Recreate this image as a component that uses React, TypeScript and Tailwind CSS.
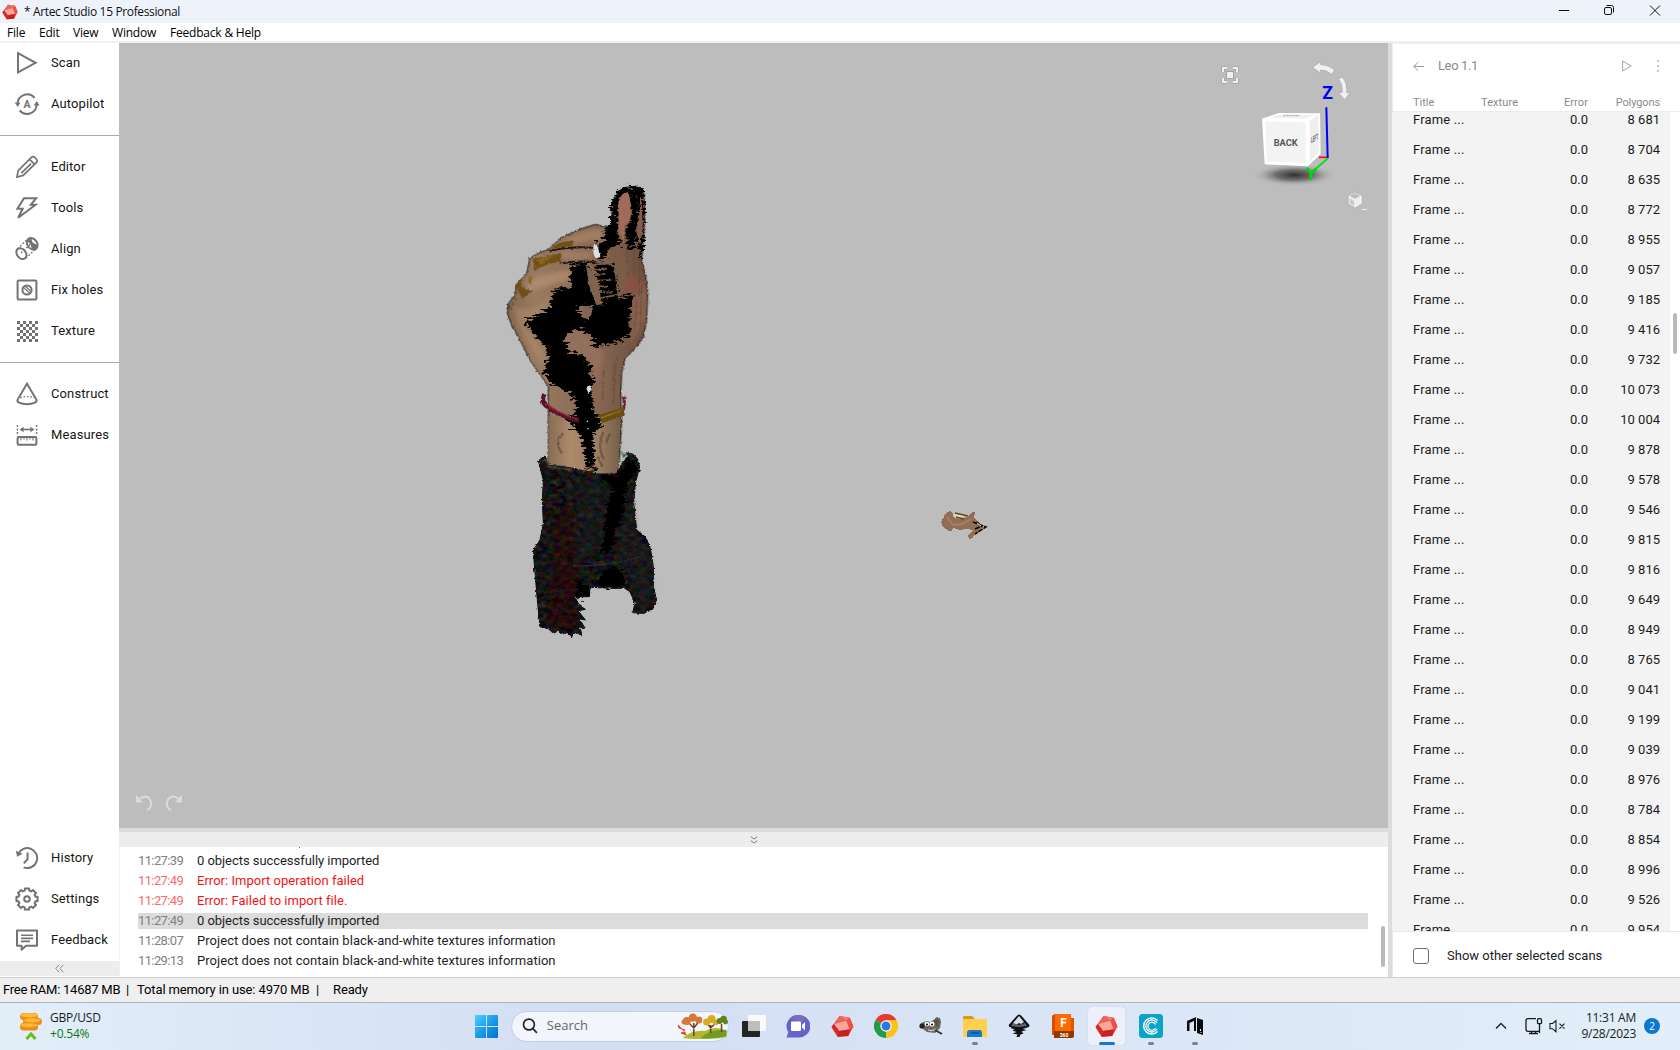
import React from "react";

type IconName =
  | "scan" | "autopilot" | "editor" | "tools" | "align" | "holes"
  | "texture" | "construct" | "measures" | "history" | "settings" | "feedback";

function gearPath() {
  const pts: string[] = [];
  const n = 8;
  for (let i = 0; i < n; i++) {
    const a = (i * 2 * Math.PI) / n - Math.PI / 2;
    [[-0.2, 10.8], [0.2, 10.8], [0.27, 8.7], [0.52, 8.7]].forEach(([d, r]) => {
      pts.push(`${(12 + r * Math.cos(a + d)).toFixed(2)},${(12 + r * Math.sin(a + d)).toFixed(2)}`);
    });
  }
  return `M${pts.join("L")}Z`;
}

function ToolIcon({ name }: { name: IconName }) {
  const shapes: Record<IconName, React.ReactNode> = {
    scan: <path d="M3 2.2v19.2L20.6 11.8z" />,
    autopilot: (
      <g>
        <path d="M2.6 11.5a9.6 9.6 0 0 1 17-5.6M21.6 13a9.6 9.6 0 0 1-17 5.4" />
        <path d="M-.3 10.6h5.8L2.7 15zM18.7 13.4h5.8L21.8 9z" fill="#737373" stroke="none" />
        <text x="12" y="15.8" fontSize="10.5" fontWeight="700" textAnchor="middle" fill="#737373" stroke="none" fontFamily="Roboto, sans-serif">A</text>
      </g>
    ),
    editor: <path d="M2 22l1.2-6.4L16.6 2.2q1.8-1.2 3.4.5l1.3 1.3q1.6 1.7.2 3.4L8.2 20.4zM14.6 4.4l5 5M16 8.6L6.4 18.2" strokeWidth="1.7" />,
    tools: <path d="M9 2.2h12.2l-5.4 6.6h4.8L3.2 21.8l4.400-9H2.400z" />,
    align: (
      <g>
        <ellipse cx="6.4" cy="16.6" rx="4.4" ry="6" transform="rotate(-38 6.4 16.6)" />
        <ellipse cx="17.2" cy="6.8" rx="4.8" ry="6.2" transform="rotate(-38 17.2 6.8)" />
        <path d="M12.4 4.2q1-3 4-3l1 4 5 3q.6 3-1.600 5.200l-4-2-1.500-4.500z" fill="#737373" stroke="none" />
        <path d="M2.5 12L13 1.500M10.800 21.400L21.500 11M6 16L16.500 6" strokeWidth="1.3" strokeDasharray="2 1.6" />
      </g>
    ),
    holes: (
      <g>
        <rect x="2.6" y="2.6" width="18.8" height="18.8" rx="1" />
        <circle cx="12" cy="12" r="4.6" />
        <path d="M8.600 9.600l6.200 5.400M10 8l5.600 5" strokeWidth="1.2" />
      </g>
    ),
    texture: (
      <g fill="#737373" stroke="none" shapeRendering="crispEdges">
        {Array.from({ length: 49 }, (_, i) => i)
          .filter((i) => i % 2 === 0)
          .map((i) => (
            <rect key={i} x={1.5 + (i % 7) * 3} y={1.5 + Math.floor(i / 7) * 3} width="3" height="3" />
          ))}
      </g>
    ),
    construct: (
      <g>
        <path d="M12 1.800L2.600 17.600c-1.200 2.800 3.600 4.600 9.400 4.600s10.600-1.800 9.400-4.600z" />
        <path d="M5.200 15.600q6.800-2 13.800 0" strokeWidth="1.4" strokeDasharray="1.6 1.8" />
      </g>
    ),
    measures: (
      <g>
        <rect x="2.6" y="14" width="18.8" height="7.8" rx="1" />
        <path d="M6 14v3.400M9 14v2.400M12 14v3.400M15 14v2.400M18 14v3.400" strokeWidth="1.1" />
        <path d="M2.400 2v9M21.600 2v9" strokeWidth="1.4" strokeDasharray="2 1.5" />
        <path d="M6 6.500h12" strokeWidth="1.6" />
        <path d="M4.600 6.500l4-2.700v5.400zM19.400 6.500l-4-2.700v5.400z" fill="#737373" stroke="none" />
      </g>
    ),
    history: (
      <g>
        <path d="M3 8.200A10 10 0 1 1 8.600 21.400" />
        <path d="M.8 4.800l1.400 6 5.400-3z" fill="#737373" stroke="none" />
        <path d="M12.600 6.400v6.800l-3.800 4" />
      </g>
    ),
    settings: (
      <g>
        <path d={gearPath()} strokeLinejoin="round" />
        <circle cx="12" cy="12" r="2.8" />
      </g>
    ),
    feedback: (
      <g>
        <path d="M2 2.600h20v15.200H11l-4.400 4V17.800H2z" strokeLinejoin="round" />
        <path d="M6 7.200h12M6 10.400h12M6 13.400h9" strokeWidth="1.6" />
      </g>
    ),
  };
  return (
    <svg className="h-6 w-6 shrink-0 overflow-visible" viewBox="0 0 24 24" fill="none" stroke="#737373" strokeWidth="2">
      {shapes[name]}
    </svg>
  );
}

function ToolItem({ icon, label }: { icon: IconName; label: string }) {
  return (
    <div className="flex h-[41px] items-center pl-[15px]">
      <ToolIcon name={icon} />
      <span className="ml-3 text-[13px] tracking-[0.12px] text-[#161616]">{label}</span>
    </div>
  );
}

function RedGem({ className }: { className: string }) {
  return (
    <svg className={className} viewBox="0 0 24 24">
      <path d="M9 1L19.500 2.800 23.400 12 18 22 7 22.800.6 12.500z" fill="#e2382f" />
      <path d="M9 1L19.500 2.800 16 6z" fill="#f7796c" />
      <path d="M9 1L3 9.500 16 6z" fill="#ee6357" />
      <path d="M16 6l3.500-3.200L23.400 12l-3.900 3z" fill="#ef5046" />
      <path d="M3 9.500L16 6l3.500 9L8.500 16.800z" fill="#f9a79c" />
      <path d="M3 9.500L.6 12.500 7 22.800l1.500-6z" fill="#d62a24" />
      <path d="M8.500 16.800l11-1.800L18 22 7 22.800z" fill="#c9211d" />
    </svg>
  );
}

function TitleBar() {
  return (
    <div className="flex h-[23px] shrink-0 items-center justify-between bg-[#eef3fb]">
      <div className="flex items-center">
        <RedGem className="ml-[2px] h-4 w-4" />
        <span className="ml-[6px] font-['Open_Sans',sans-serif] text-[12px] tracking-[-0.36px] text-[#111]">* Artec Studio 15 Professional</span>
      </div>
      <svg className="mr-[18px] mb-[3px] h-[14px] w-[106px]" viewBox="0 0 106 14" fill="none" stroke="#111" strokeWidth="1">
        <path d="M3 7.500h10" />
        <rect x="48.500" y="4.500" width="7" height="7" rx="1.500" />
        <path d="M50.500 2.500h5q2 0 2 2v5" />
        <path d="M94 2.500l10 10M104 2.500l-10 10" />
      </svg>
    </div>
  );
}

function MenuBar() {
  const items: [string, string][] = [
    ["File", "w-8"], ["Edit", "w-[34px]"], ["View", "w-[39px]"], ["Window", "w-[58px]"], ["Feedback & Help", ""],
  ];
  return (
    <div className="flex h-5 shrink-0 items-center border-b-2 border-[#f0f0f0] bg-white pl-[7px] pt-[2px] font-['Open_Sans',sans-serif] text-[12px] tracking-[-0.2px] text-black">
      {items.map(([t, w]) => (
        <span key={t} className={`${w} whitespace-nowrap`}>{t}</span>
      ))}
    </div>
  );
}

function Sidebar() {
  return (
    <aside className="flex w-[119px] shrink-0 flex-col bg-white">
      <div className="-mt-[1px]">
        <ToolItem icon="scan" label="Scan" />
        <ToolItem icon="autopilot" label="Autopilot" />
      </div>
      <div className="mt-[11px] border-t border-[#a9a9a9] pt-[10px]">
        <ToolItem icon="editor" label="Editor" />
        <ToolItem icon="tools" label="Tools" />
        <ToolItem icon="align" label="Align" />
        <ToolItem icon="holes" label="Fix holes" />
        <ToolItem icon="texture" label="Texture" />
      </div>
      <div className="mt-[11px] border-t border-[#a9a9a9] pt-[10px]">
        <ToolItem icon="construct" label="Construct" />
        <ToolItem icon="measures" label="Measures" />
      </div>
      <div className="mt-auto">
        <ToolItem icon="history" label="History" />
        <ToolItem icon="settings" label="Settings" />
        <ToolItem icon="feedback" label="Feedback" />
      </div>
      <div className="mt-px mb-px flex h-[15px] items-center justify-center bg-[#ededed]">
        <svg className="h-[9px] w-[9px]" viewBox="0 0 9 9" fill="none" stroke="#8a8a8a"><path d="M4 .8L.8 4.500 4 8.200M8.200.8L5 4.500l3.200 3.700" /></svg>
      </div>
    </aside>
  );
}

const HAND =
  "M405 80L415 62 440 52H478L492 70 495 130 492 190 485 270 497 320 503 370 500 450 490 500 470 530 435 565 425 610 422 670 425 750 418 870 410 915 350 912 280 895 205 880V650L150 570 115 500 95 465 82 430 85 400 105 375 108 345 140 310 150 265 165 255 210 235 240 205 290 182 345 163 375 170 400 165 393 110Z";

const SLEEVE =
  "M175 872L195 858 205 885 280 895 350 912H410L430 872 446 858 436 848 458 852 472 866 479 890 466 940 461 1000 470 1080 495 1100 510 1130 520 1190V1250L530 1290 520 1315 490 1330 458 1328 465 1300 450 1265 430 1252 400 1255 330 1252 328 1280H284L298 1306 316 1318 294 1322 316 1350 298 1346 316 1376 294 1370 306 1398 288 1386 276 1400 262 1388 248 1392 236 1382 220 1390 205 1376 180 1370 172 1290 165 1210 160 1140 180 1110 190 1060 187 990 190 930Z";

function ScannedHand() {
  return (
    <svg className="absolute left-[361px] top-[127px] h-[480px] w-[200px]" viewBox="0 0 600 1440">
      <defs>
        <filter id="ragged" x="-5%" y="-5%" width="110%" height="110%" colorInterpolationFilters="sRGB">
          <feTurbulence type="fractalNoise" baseFrequency="0.05 0.13" numOctaves="2" seed="4" result="n" />
          <feDisplacementMap in="SourceGraphic" in2="n" scale="38" xChannelSelector="R" yChannelSelector="G" />
        </filter>
        <filter id="edge" x="-5%" y="-5%" width="110%" height="110%" colorInterpolationFilters="sRGB">
          <feTurbulence type="fractalNoise" baseFrequency="0.14" numOctaves="1" seed="9" result="n" />
          <feDisplacementMap in="SourceGraphic" in2="n" scale="10" xChannelSelector="R" yChannelSelector="G" />
        </filter>
        <filter id="cloth" x="0" y="0" width="100%" height="100%" colorInterpolationFilters="sRGB">
          <feTurbulence type="fractalNoise" baseFrequency="0.05 0.07" numOctaves="4" seed="12" />
          <feColorMatrix values="0.46 0 0 0 -0.15  0 0.36 0 0 -0.1  0 0 0.4 0 -0.12  0 0 0 0 1" />
          <feComposite in2="SourceGraphic" operator="in" />
        </filter>
        <filter id="soft" x="-20%" y="-20%" width="140%" height="140%"><feGaussianBlur stdDeviation="6" /></filter>
        <linearGradient id="skin" x1="0" x2="1">
          <stop offset="0" stopColor="#856750" />
          <stop offset=".2" stopColor="#9a7b60" />
          <stop offset=".65" stopColor="#866752" />
          <stop offset="1" stopColor="#6c4d3d" />
        </linearGradient>
        <linearGradient id="wrist" x1="0" x2="1">
          <stop offset="0" stopColor="#8a6c54" />
          <stop offset=".3" stopColor="#ac8a6c" />
          <stop offset=".7" stopColor="#9c7e61" />
          <stop offset="1" stopColor="#76604b" />
        </linearGradient>
        <clipPath id="handClip"><path d={HAND} /></clipPath>
      </defs>

      <g filter="url(#edge)">
        <path d={HAND} fill="url(#skin)" stroke="#1a120c" strokeWidth="3" />
        <path d="M206 740L290 750H350L420 740 418 870 410 915 350 912 280 895 206 880Z" fill="url(#wrist)" />
        <g clipPath="url(#handClip)">
          <g filter="url(#soft)">
            <path d="M100 410Q150 430 190 400L210 370 200 420 130 460 190 540 200 600Q120 500 100 410Z" fill="#b18d6d" opacity=".55" />
            <path d="M140 330Q200 310 270 300V330Q210 340 140 370Z" fill="#b59072" opacity=".7" />
            <path d="M240 220Q300 180 370 175V210Q290 215 240 230Z" fill="#b08d6c" opacity=".6" />
            <path d="M240 245H335V268H250Z" fill="#ad8969" opacity=".6" />
            <path d="M430 320Q470 310 500 340L496 380 436 390Z" fill="#8b5146" opacity=".8" />
            <path d="M450 400L500 340V450L450 530Z" fill="#876050" />
            <path d="M246 512L300 476 345 520 372 550 350 640 330 580Z" fill="#946f5c" />
          </g>
          <path d="M212 238Q240 208 285 214L274 228 216 236ZM158 266L198 258 243 250V276Q193 280 164 304ZM106 345L122 332 128 354 158 362 126 388Z" fill="#705018" />
          <path d="M148 318L156 322 152 346 144 338ZM165 270L225 254 185 284Z" fill="#89661f" />
          <path d="M112 350Q104 400 84 430" stroke="#70511c" strokeWidth="5" fill="none" strokeDasharray="9 7" />
          <path d="M205 241Q280 223 340 232L338 236Q278 232 212 245ZM240 278Q290 268 350 274V278Q290 276 240 283ZM220 356Q250 350 272 358L250 361Z" fill="#1e1610" />
          <g stroke="#664c3a" strokeWidth="4" opacity=".7" fill="none">
            <path d="M420 230L426 300M440 240L444 320M462 230V320M478 260V380M402 580L398 660M410 560L400 700M370 600L368 690M470 390L464 490M485 350L481 470" strokeDasharray="26 5" />
            <path d="M235 800Q230 830 245 850M250 790L236 805M370 785Q350 830 372 870M352 860L368 890M390 790L378 820" strokeWidth="7" />
          </g>
        </g>
      </g>

      {/* Gaps in the captured surface */}
      <g filter="url(#ragged)" fill="#000" stroke="#000" strokeWidth="7">
        <path d="M400 96L415 66 440 54 484 56 488 92 490 170 484 244 480 266 476 210 486 150 480 90 470 70 450 72 422 76 410 112V200L418 222 385 234 374 262 358 264 350 226 378 214 374 178 400 170Z" />
        <path d="M454 76L472 88 474 122 468 160 470 200 460 232H446L440 178 458 160Z" />
        <path d="M274 284H320L326 340 352 400 304 408 282 402 300 432 324 456 340 412 400 396 454 378 446 430 442 490 420 510 346 530 340 496 300 472 278 478 242 508 274 548 306 560 330 592 338 640 324 652 334 690 342 750 294 750 290 690 258 660 210 636 198 600 206 560 196 520 162 490 138 456 180 434 216 412 222 366 274 354Z" />
        <path d="M276 402L300 438 346 466 350 500 300 474 262 480Z" />
        <path d="M344 284H398L414 322 412 388 366 396 358 340Z" />
        <path d="M296 730L346 734 362 752 350 780 336 786 340 850 342 893 324 898 318 850 308 800 286 774 264 744Z" />
      </g>
      <path d="M300 414L338 412 334 434 322 448Q310 434 300 414Z" fill="#836553" filter="url(#edge)" />
      <path d="M318 288L332 296 352 330 366 402 350 406 330 356Z" fill="#816450" filter="url(#edge)" />
      <g filter="url(#edge)" stroke="#7c5f49" strokeWidth="5" fill="none">
        <path d="M332 284L392 280M340 300L380 296M344 316L376 312M350 332L394 330M352 348L384 350M358 366L398 368M362 384L404 376M404 290L416 380" />
        <path d="M378 524L436 516M382 532L434 526M386 542L430 538" strokeWidth="3" strokeDasharray="8 3" />
      </g>
      <path d="M386 236L420 228 444 288 432 370 416 350 408 290Z" fill="#7b5d47" filter="url(#edge)" />
      <path d="M416 96Q424 64 446 68L454 112 450 152 436 164 430 220 416 180Z" fill="#a06c58" filter="url(#edge)" />
      <path d="M480 78L486 100 488 180 480 226 468 180 480 130Z" fill="#845c4d" filter="url(#edge)" />
      <path d="M341 226L355 224V240L362 262 346 264 340 250ZM318 652L330 646 334 660 326 672Z" fill="#dedede" filter="url(#edge)" />

      {/* Wristbands */}
      <g filter="url(#edge)" fill="none">
        <path d="M193 672Q184 694 196 706 236 738 296 752" stroke="#591428" strokeWidth="13" />
        <path d="M196 698Q234 732 290 746" stroke="#8f2c45" strokeWidth="4" />
        <path d="M430 678Q436 700 430 720" stroke="#6d2034" strokeWidth="9" />
        <path d="M354 736L430 712 434 736 366 760Z" fill="#6a4e10" />
        <path d="M362 744L424 722" stroke="#937325" strokeWidth="5" />
      </g>

      {/* Dark sleeve */}
      <g filter="url(#edge)">
        <path d={SLEEVE} fill="#0c0c0d" stroke="#0c0c0d" strokeWidth="3" />
        <path d={SLEEVE} fill="#000" filter="url(#cloth)" />
        <g filter="url(#soft)" opacity=".35">
          <path d="M230 1010L280 1000 290 1110 300 1180 280 1300 300 1380 200 1370 220 1200Z" fill="#3a0505" />
          <path d="M290 920L400 950 380 1020 370 1140 290 1180Z" fill="#1f2124" />
          <path d="M455 940L470 1090 510 1140 520 1300 480 1310 440 1200 400 1130Z" fill="#242326" />
        </g>
      </g>
      <g filter="url(#ragged)" fill="#000">
        <path d="M356 915H412L440 866 470 880 476 900 440 940 436 1010 412 1080 392 1150 366 1150 372 1080 384 1010 396 950Z" />
        <path d="M364 1210L410 1186 436 1230 430 1250 350 1250ZM290 1230L328 1250 326 1280H286Z" />
      </g>
      <g filter="url(#edge)" fill="none">
        <path d="M280 1186Q370 1194 480 1160" stroke="#2c2c31" strokeWidth="4" />
        <path d="M186 872L198 870 206 890 276 900" stroke="#57503c" strokeWidth="5" opacity=".8" />
        <path d="M422 850L440 854 434 862Z" fill="#27614e" />
        <path d="M310 905L346 880M324 908L350 892" stroke="#4f3c20" strokeWidth="4" />
      </g>
      <path d="M322 752v4M324 774v4" stroke="#ddd" strokeWidth="4" />
    </svg>
  );
}

function ScanFragment() {
  return (
    <svg className="absolute left-[820px] top-[462px] h-[34px] w-[52px]" viewBox="0 0 52 34">
      <path d="M2 17L5 12 6 9 11 6 14 8V12L22 14 30 11 33 7H36L35 13 39 16 42 20 44 23 38 28 34 31V33L30 34 29 30 34 25 28 24 20 25 14 23 13 26H10L4 22Z" fill="#936e56" shapeRendering="crispEdges" />
      <path d="M8 12l6 8 9-1 9-5" stroke="#a77f61" strokeWidth="2" fill="none" />
      <path d="M15 9l9 1v4l-8-1z" fill="#dedbd4" />
      <path d="M16 8l13 3M17 12l8 2" stroke="#69460d" strokeWidth="1.500" />
      <path d="M34 17l13 5-11 7M38 17l5 5M36 24l7-3" stroke="#090704" strokeWidth="1.600" fill="none" strokeDasharray="5 1" />
      <path d="M38 18l4 3" stroke="#eee" strokeWidth="1" />
    </svg>
  );
}

function NavigationCube() {
  return (
    <svg className="absolute left-[1121px] top-[7px] h-[160px] w-[140px]" viewBox="120 30 420 480">
      <defs>
        <radialGradient id="cubeShadow">
          <stop offset="0" stopColor="#303030" />
          <stop offset=".45" stopColor="#626262" stopOpacity=".85" />
          <stop offset="1" stopColor="#bdbdbd" stopOpacity="0" />
        </radialGradient>
      </defs>
      <ellipse cx="283" cy="405" rx="128" ry="34" fill="url(#cubeShadow)" />
      <path d="M186 236l50-17 124 1 2 122-38 37-130-6z" fill="#fff" />
      <path d="M196 244l120 2 2 122-118-3z" fill="#f3f3f3" />
      <path d="M329 243l26-18 2 112-28 28z" fill="#efefef" />
      <path d="M208 233l36-10 98 1-22 12z" fill="#f0f0f0" />
      <text x="221" y="317" fontSize="27" fontWeight="700" fill="#555" fontFamily="Roboto, sans-serif" textLength="72" lengthAdjust="spacingAndGlyphs">BACK</text>
      <text transform="translate(333 309) skewY(-27) scale(.38 1)" fontSize="25" fontWeight="700" fill="#666" fontFamily="Roboto, sans-serif">LEFT</text>
      <path d="M250 227h48" stroke="#a5a5a5" strokeWidth="3" strokeDasharray="7 2" />
      <path d="M357 352h28" stroke="#f01010" strokeWidth="5" />
      <path d="M379 202l4 152" stroke="#0000fa" strokeWidth="6" />
      <path d="M384 355l-42 36" stroke="#00e516" strokeWidth="6" />
      <path d="M320 384l13 16 16-14M333 400v20" stroke="#00d60e" strokeWidth="8" fill="none" />
      <text x="383" y="176" fontSize="53" fontWeight="700" fill="#0000f5" textAnchor="middle" fontFamily="Roboto, sans-serif">Z</text>
      <g fill="#f1f1f1" stroke="#a7a7a7" strokeWidth="2">
        <path d="M338 82l24-17v9q24 0 42 16l-9 13q-16-14-34-13v9z" />
        <path d="M427 111q16 20 13 47l10-1-16 22-18-21 11-1q2-22-11-40z" />
      </g>
      <path d="M444 467l21-11 22 11v24l-21 13-22-12z" fill="#eeeeee" stroke="#a5a5a5" strokeWidth="2" />
      <path d="M449 468l16-8 15 8-15 8z" fill="#bbbbbb" />
      <path d="M449 475l13 7v15l-13-7z" fill="#c9c9c9" />
      <path d="M484 507h19l-9 9z" fill="#eeeeee" />
    </svg>
  );
}

function Viewport() {
  return (
    <div className="relative h-[785px] shrink-0 overflow-hidden bg-[#bdbdbd]">
      <ScannedHand />
      <ScanFragment />
      <NavigationCube />
      <svg className="absolute left-[1102px] top-[23px] h-[18px] w-[18px]" viewBox="0 0 18 18" fill="none" stroke="#a3a3a3">
        <path d="M2 6V2h4M12 2h4v4M16 12v4h-4M6 16H2v-4" strokeWidth="3.500" />
        <path d="M2 6V2h4M12 2h4v4M16 12v4h-4M6 16H2v-4" stroke="#f0f0f0" strokeWidth="2" />
        <rect x="5.500" y="5.500" width="7" height="7" fill="#f0f0f0" />
      </svg>
      <svg className="absolute left-[16px] top-[750px] h-[20px] w-[48px]" viewBox="0 0 48 20" fill="none" stroke="#dadada" strokeWidth="2">
        <path d="M4 6q7-5 11 .5 3.500 7-3 10.500M44 6q-7-5-11 .5-3.500 7 3 10.500" />
        <path d="M1 1.500v8h7zM47 1.500v8h-7z" fill="#dadada" stroke="none" />
      </svg>
    </div>
  );
}

const LOG = [
  { time: "11:27:39", text: "0 objects successfully imported" },
  { time: "11:27:49", text: "Error: Import operation failed", error: true },
  { time: "11:27:49", text: "Error: Failed to import file.", error: true },
  { time: "11:27:49", text: "0 objects successfully imported", selected: true },
  { time: "11:28:07", text: "Project does not contain black-and-white textures information" },
  { time: "11:29:13", text: "Project does not contain black-and-white textures information" },
];

function LogPanel() {
  return (
    <div className="flex min-h-0 flex-1 flex-col border-t-4 border-[#dcdcdc]">
      <div className="flex h-[15px] shrink-0 items-center justify-center bg-[#ededed]">
        <svg className="h-[8px] w-[8px]" viewBox="0 0 8 8" fill="none" stroke="#7b7b7b"><path d="M.7.700L4 3 7.300.700M.7 4.700L4 7l3.300-2.300" /></svg>
      </div>
      <div className="flex flex-1 border-l border-[#f0f0f0] bg-white pl-[18px]">
        <div className="w-[1230px]">
          <div className="ml-[161px] h-1 w-px"><div className="h-px bg-red-500" /></div>
          {LOG.map((row, i) => (
            <div key={i} className="flex h-5 items-center">
              <div className={`flex h-4 w-full items-center text-[13px] ${row.selected ? "bg-[#dcdcdc]" : ""} ${row.error ? "text-[#f51414]" : "text-[#1e1e1e]"}`}>
                <span className={`w-[59px] tracking-[-0.62px] ${row.error ? "text-[#fa6b6b]" : "text-[#808080]"}`}>{row.time}</span>
                <span className={row.text.startsWith("Project") ? "tracking-[0.05px]" : row.error ? "tracking-[0.03px]" : "tracking-[-0.05px]"}>{row.text}</span>
              </div>
            </div>
          ))}
        </div>
        <div className="mt-[79px] ml-[13px] h-[41px] w-1 rounded-full bg-[#b9b9b9]" />
      </div>
    </div>
  );
}

const POLYGONS = [
  "8 681", "8 704", "8 635", "8 772", "8 955", "9 057", "9 185", "9 416", "9 732", "10 073",
  "10 004", "9 878", "9 578", "9 546", "9 815", "9 816", "9 649", "8 949", "8 765", "9 041",
  "9 199", "9 039", "8 976", "8 784", "8 854", "8 996", "9 526", "9 954",
];

function ScanPanel() {
  return (
    <aside className="flex w-[292px] shrink-0 flex-col border-l-4 border-[#dcdcdc] bg-white">
      <div className="flex h-[69px] shrink-0 flex-col border-b border-l border-t border-[#ececec] pl-5 text-[#8b8b8b]">
        <div className="mt-[10px] flex h-6 items-center">
          <svg className="h-[11px] w-[11px]" viewBox="0 0 11 11" fill="none" stroke="#999"><path d="M11 5.500H.8M5 1.300L.8 5.500 5 9.700" /></svg>
          <span className="ml-[14px] w-[184px] text-[13px] tracking-[-0.38px]">Leo 1.1</span>
          <svg className="h-3 w-[10px]" viewBox="0 0 10 12" fill="none" stroke="#a3a3a3"><path d="M.6 1v10l8.600-5z" /></svg>
          <svg className="ml-[25px] h-3 w-[3px]" viewBox="0 0 3 12" fill="#c7c7c7"><path d="M0 0h2v2H0zM0 5h2v2H0zM0 10h2v2H0z" /></svg>
        </div>
        <div className="mt-[17px] grid grid-cols-[68px_107px_72px] text-[11px] leading-4">
          <span>Title</span>
          <span className="flex justify-between"><span className="tracking-[0.1px]">Texture</span><span className="tracking-[0.1px]">Error</span></span>
          <span className="text-right tracking-[-0.1px]">Polygons</span>
        </div>
      </div>
      <div className="flex h-[819px] shrink-0 overflow-hidden">
        <div className="w-[278px] bg-[#f3f3f3]">
          <div className="-mt-[7px] pl-[21px]">
            {POLYGONS.map((p, i) => (
              <div key={i} className="grid h-[30px] grid-cols-[68px_107px_72px] items-center text-[13px] text-[#1b1b1b]">
                <span className="tracking-[0.16px]">Frame ...</span>
                <span className="text-right">0.0</span>
                <span className="text-right">{p}</span>
              </div>
            ))}
          </div>
        </div>
        <div className="mt-[201px] ml-[3px] h-[41px] w-1 rounded-full bg-[#b9b9b9]" />
      </div>
      <div className="flex flex-1 items-center border-l border-t border-[#e8e8e8] pl-5 pt-[2px] text-[13px] text-[#1b1b1b]">
        <div className="h-4 w-4 rounded-[3px] border border-[#6f6f6f]" />
        <span className="ml-[18px]">Show other selected scans</span>
      </div>
    </aside>
  );
}

function StatusBar() {
  return (
    <div className="flex h-[26px] shrink-0 items-center border-b border-t border-b-[#aab3bf] border-t-[#cfcfcf] bg-[#efefef] pl-[3px] text-[13px] tracking-[-0.12px] text-black">
      <span className="w-[123px] whitespace-nowrap tracking-[-0.25px]">Free RAM: 14687 MB</span>
      <span className="w-[11px]">|</span>
      <span className="w-[179px] whitespace-nowrap">Total memory in use: 4970 MB</span>
      <span className="w-[17px]">|</span>
      <span>Ready</span>
    </div>
  );
}

function Leaves() {
  return (
    <svg className="h-[26px] w-[52px]" viewBox="0 0 52 26">
      <path d="M6 25q9-8 22-7 12-6 22 0v6q-20 4-44 1z" fill="#b3b82a" />
      <path d="M24 25q10-9 26-8v6q-10 3-26 2z" fill="#6f9d22" />
      <path d="M17 10v13M13 11l4 4 4-5M34 12v8M31 11l3 4 4-4M45 11v8" stroke="#6b3f22" strokeWidth="1.500" fill="none" />
      <g fill="#d77834"><circle cx="10" cy="8" r="4" /><circle cx="16" cy="4.500" r="4.200" /><circle cx="22" cy="7" r="3.600" /><circle cx="7" cy="9" r="2.500" /></g>
      <g fill="#d7ac22"><circle cx="30" cy="9" r="3.600" /><circle cx="35" cy="6" r="4" /><circle cx="39" cy="9.500" r="2.800" /></g>
      <g fill="#66801e"><circle cx="43" cy="8" r="3" /><circle cx="47" cy="6" r="3.400" /><circle cx="49" cy="9" r="2.500" /></g>
      <path d="M1 12l4 4-3-1zM4 20l4-1 1 3zM5 16l3 1-1 1z" fill="#e64c25" stroke="#e64c25" />
    </svg>
  );
}

function Taskbar() {
  return (
    <div className="flex flex-1 items-center bg-gradient-to-r from-[#e2eef8] via-[#d3def3] via-35% to-[#e2eef9] pb-px font-['Open_Sans',sans-serif] text-[#1b1b1b]">
      <svg className="ml-[18px] mb-px h-[28px] w-[25px]" viewBox="0 0 25 28">
        <g fill="#f18a16"><rect x="2" y="1" width="18" height="7" rx="3.500" /><rect x="5" y="6" width="19" height="7" rx="3.500" /><rect x="2" y="11" width="18" height="7.500" rx="3.500" /></g>
        <g fill="#ffbb38"><ellipse cx="11" cy="3.200" rx="8.500" ry="2.300" /><ellipse cx="14.500" cy="8.300" rx="8.500" ry="2" /><ellipse cx="11" cy="13.200" rx="8.500" ry="2" /></g>
        <path d="M8.500 27l4.500-5 4.500 5" fill="none" stroke="#62c21a" strokeWidth="3" />
      </svg>
      <div className="ml-[7px] w-[425px] text-[12px] leading-4 tracking-[-0.2px]">
        <div>GBP/USD</div>
        <div className="text-[#087a12]">+0.54%</div>
      </div>
      <svg className="h-[23px] w-[23px]" viewBox="0 0 23 23">
        <defs><linearGradient id="win" x1="0" y1="0" x2="1" y2="1"><stop offset="0" stopColor="#4fd0ff" /><stop offset=".5" stopColor="#1a9de8" /><stop offset="1" stopColor="#0070d0" /></linearGradient></defs>
        <path d="M0 1q0-1 1-1h10v11H0zM12 0h10q1 0 1 1v10H12zM0 12h11v11H1q-1 0-1-1zM12 12h11v10q0 1-1 1H12z" fill="url(#win)" />
      </svg>
      <div className="ml-[13px] flex h-[31px] w-[218px] items-center rounded-full border border-[#c5cde2] bg-[#f2f5fc] pl-[10px]">
        <svg className="h-4 w-4" viewBox="0 0 16 16" fill="none" stroke="#222" strokeWidth="1.700"><circle cx="7" cy="6.500" r="5.500" /><path d="M11 10.500l4 4.500" /></svg>
        <span className="ml-[9px] w-[131px] text-[13px] text-[#666]">Search</span>
        <Leaves />
      </div>
      <svg className="ml-[13px] h-[23px] w-[25px]" viewBox="0 0 25 23">
        <rect x="0" y="6" width="18" height="16" rx="1" fill="#242424" />
        <rect x="6" y="0" width="18" height="16" rx="1" fill="#fafafa" />
        <rect x="6" y="6" width="12" height="10" fill="#bdbdbd" />
      </svg>
      <svg className="ml-[19px] h-[23px] w-[24px]" viewBox="0 0 24 23">
        <path d="M12 0a11.300 11.300 0 1 1 0 22.500H.5l1.800-5.200A11.300 11.300 0 0 1 12 0z" fill="#6264c9" />
        <path d="M4 3.500A11.300 11.300 0 0 1 20 3l-4 5z" fill="#7d6bb9" />
        <rect x="5" y="6.500" width="10" height="9.500" rx="1" fill="#fff" /><path d="M16 10l3-3v8.500l-3-3z" fill="#fff" />
      </svg>
      <RedGem className="ml-[21px] h-[23px] w-[23px]" />
      <svg className="ml-[20px] h-6 w-6" viewBox="0 0 24 24">
        <path d="M12 12L1.600 6A12 12 0 0 1 22.400 6z" fill="#e33b2e" />
        <path d="M12 12h0L22.400 6A12 12 0 0 1 12 24z" fill="#fbc116" />
        <path d="M12 12l0 12A12 12 0 0 1 1.600 6z" fill="#229a4a" />
        <path d="M12 6h10.400L17 14.500 12 24 17 15z" fill="#fbc116" />
        <circle cx="12" cy="12" r="5.700" fill="#fff" /><circle cx="12" cy="12" r="4.500" fill="#2c75ea" />
      </svg>
      <svg className="ml-[21px] h-[19px] w-[25px]" viewBox="0 0 25 19">
        <path d="M5 5l3-1 3 1 5-3 1-2 4 1 1 4-1 6-5 5-8-1-4-3-3-3 1-3z" fill="#6e675d" />
        <path d="M16 2l4 1-1 7-5-3z" fill="#57524a" />
        <circle cx="3" cy="9" r="2.600" fill="#222" /><circle cx="8" cy="7" r="2.300" fill="#fff" /><circle cx="13" cy="7" r="2.500" fill="#fff" /><circle cx="8" cy="7.500" r="1" /><circle cx="13" cy="7.500" r="1" />
        <path d="M9 13q4 2 8-1" stroke="#ddd" fill="none" /><path d="M16 13l7 4" stroke="#333" strokeWidth="2" />
      </svg>
      <div className="relative ml-[19px]">
        <svg className="h-[23px] w-6" viewBox="0 0 24 23">
          <path d="M0 2q0-1 1-1h8l3 3v5H0z" fill="#dc9c12" /><rect y="4" width="24" height="18" rx="1" fill="#ffd04e" />
          <path d="M4 22v-4q0-3 3-3h10q2 0 2 3v4z" fill="#1978c9" /><path d="M8 18h8" stroke="#0b4f96" strokeWidth="1.500" />
        </svg>
        <div className="absolute -bottom-[7px] left-[9px] h-[3px] w-[6px] rounded-full bg-[#7c828d]" />
      </div>
      <svg className="ml-[21px] h-6 w-[22px]" viewBox="0 0 22 24">
        <path d="M11 .500q1.500 0 3 2l7 8q1.500 2-1.500 3l-5 1.500 4 1-5 1.500 2 2-3 1-1 2.500h-3l1-2.500-5-1 4-1.500-4-1.500 2-1-4-1.500 1-1L1.500 13q-1.500-1.500 0-3L8.500 2.300Q10 .5 11 .5z" fill="#111" />
        <path d="M11 2l5 6-3 2-2-1-3 2-3-2z" fill="#d5deeb" />
        <path d="M5 9l6 2 6-2 2 3-8 1-8-1z" fill="#5d646f" />
      </svg>
      <svg className="ml-[22px] h-6 w-[22px]" viewBox="0 0 22 24">
        <path d="M0 2l3-2h16v20H0z" fill="#ff6a00" /><path d="M0 2l3-2v21H0z" fill="#d94e00" /><path d="M19 4h3v14h-3z" fill="#d95800" />
        <path d="M2 17h20v5q0 2-2 2H2z" fill="#8f3800" />
        <text x="11.500" y="13" textAnchor="middle" fill="#fff" fontSize="12" fontWeight="700" fontFamily="Roboto, sans-serif">F</text>
        <text x="12" y="22.500" textAnchor="middle" fill="#fff" fontSize="5" fontWeight="700" fontFamily="Roboto, sans-serif">360</text>
      </svg>
      <div className="relative ml-[14px] flex h-[38px] w-[38px] items-center justify-center rounded border-r border-[#dce1ee] bg-[#edf0f8] shadow-[0_0_1px_#b8bfcf]">
        <RedGem className="h-[23px] w-[23px]" />
        <div className="absolute bottom-0 left-[11px] h-[3px] w-4 rounded-full bg-[#0b7ada]" />
      </div>
      <div className="relative ml-[13px]">
        <svg className="h-6 w-6" viewBox="0 0 24 24" fill="none" stroke="#fff">
          <rect width="24" height="24" rx="3.500" fill="#0ba4c8" stroke="none" />
          <path d="M18.500 6.500a8 8 0 1 0 0 11" strokeWidth="1.500" /><path d="M18 9a6 6 0 1 0 0 6" strokeWidth="1.300" /><path d="M16.500 10.500a4 4 0 1 0 0 3.500" strokeWidth="1.200" />
        </svg>
        <div className="absolute -bottom-[7px] left-[9px] h-[3px] w-[6px] rounded-full bg-[#7c828d]" />
      </div>
      <div className="relative ml-[24px]">
        <svg className="h-[18px] w-[17px]" viewBox="0 0 17 18"><path d="M0 4l9-4v3L2.500 6v8H0zM7 3l2-1v12H7zM10 1l6 2v15l-6-2z" fill="#090909" /><path d="M13.500 12v2M14 15v1" stroke="#eee" /></svg>
        <div className="absolute -bottom-[10px] left-[5px] h-[3px] w-[6px] rounded-full bg-[#7c828d]" />
      </div>
      <svg className="ml-auto h-[18px] w-[72px]" viewBox="0 0 72 18" fill="none" stroke="#1b1b1b" strokeWidth="1.300">
        <path d="M1 11.500l5-5 5 5" />
        <path d="M41 1.700H33q-2 0-2 2v8.600q0 2 2 2h11M34 16.500h9M36.500 14v2M40.500 14v2" />
        <rect x="42.500" y="1.700" width="4" height="5" rx="1" /><path d="M44.500 7v9" />
        <path d="M55 6.500h2.500L61 3.700v11l-3.500-3H55zM64.500 6.700l5 5M69.500 6.700l-5 5" strokeWidth="1.100" />
      </svg>
      <div className="ml-[6px] mr-px w-[63px] text-right text-[12px] leading-4 tracking-[-0.25px]">
        <div>11:31 AM</div>
        <div>9/28/2023</div>
      </div>
      <div className="ml-[7px] mr-[20px] flex h-4 w-4 items-center justify-center rounded-full bg-[#0b78d4] text-[10px] text-white">2</div>
    </div>
  );
}

export default function App() {
  return (
    <div className="flex h-[1050px] w-[1680px] flex-col overflow-hidden bg-white font-[Roboto,sans-serif]">
      <TitleBar />
      <MenuBar />
      <div className="flex h-[934px] shrink-0">
        <Sidebar />
        <main className="flex min-w-0 flex-1 flex-col">
          <Viewport />
          <LogPanel />
        </main>
        <ScanPanel />
      </div>
      <StatusBar />
      <Taskbar />
    </div>
  );
}
